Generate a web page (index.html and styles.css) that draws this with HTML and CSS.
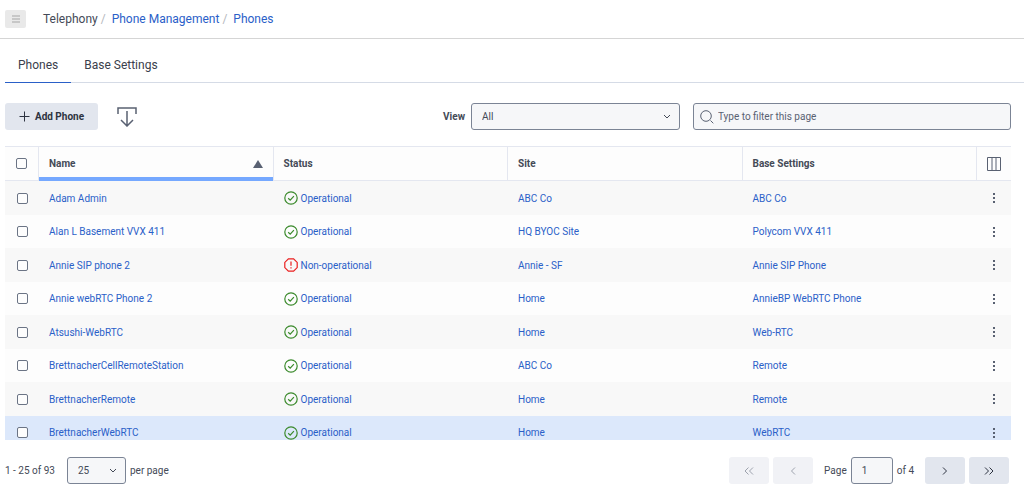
FILE: index.html
```html
<!DOCTYPE html>
<html lang="en">

<head>
    <meta charset="UTF-8">
    <title>Phone Management</title>
    <link rel="stylesheet" href="styles.css">
</head>

<body>
    <svg class="sprite" aria-hidden="true">
        <symbol id="ok" viewBox="0 0 14 14">
            <circle cx="7" cy="7" r="6.2" />
            <path d="M4.2 7.2l2 1.9 3.7-4" />
        </symbol>
        <symbol id="error" viewBox="0 0 14 14">
            <path d="M4.4.8h5.2l3.6 3.6v5.2l-3.6 3.6H4.4L.8 9.6V4.4z" />
            <path d="M7 3.4v4.4M7 9.2v1.4" />
        </symbol>
        <symbol id="dots" viewBox="0 0 4 12">
            <path d="M1 1h2v2H1zM1 5h2v2H1zM1 9h2v2H1z" />
        </symbol>
    </svg>

    <header class="topbar">
        <button class="menu-btn" type="button" aria-label="Menu">
            <svg width="10" height="8" viewBox="0 0 10 8"><path d="M1 1h8M1 4h8M1 7h8" /></svg>
        </button>
        <nav class="breadcrumb">
            <span>Telephony</span>
            <span class="sep">/</span>
            <a href="#">Phone Management</a>
            <span class="sep">/</span>
            <a href="#">Phones</a>
        </nav>
    </header>

    <main class="content">
        <nav class="tabs">
            <a class="tab active" href="#">Phones</a>
            <a class="tab" href="#">Base Settings</a>
        </nav>

        <div class="toolbar">
            <button class="btn add-btn" type="button">
                <svg width="11" height="11" viewBox="0 0 11 11"><path d="M5.500.5v10M.5 5.500h10" /></svg>
                Add Phone
            </button>
            <button class="export-btn" type="button" aria-label="Export">
                <svg width="20" height="20" viewBox="0 0 20 20"><path d="M1 7V1h18v6M10 4v14M4 13l6 6 6-6" /></svg>
            </button>
            <label class="view-label" for="view">View</label>
            <div class="select view-select">
                <select id="view">
                    <option>All</option>
                </select>
                <svg class="chevron" width="8" height="6" viewBox="0 0 8 6"><path d="M1 1l3 3 3-3" /></svg>
            </div>
            <div class="search">
                <svg width="14" height="14" viewBox="0 0 14 14"><circle cx="6" cy="6" r="5.3" /><path d="M10.5 10.5l2.8 2.8" /></svg>
                <input type="text" placeholder="Type to filter this page" aria-label="Filter">
            </div>
        </div>

        <div class="table-wrap">
            <table>
                <colgroup>
                    <col class="col-check">
                    <col>
                    <col>
                    <col>
                    <col>
                    <col class="col-menu">
                </colgroup>
                <thead>
                    <tr>
                        <th class="check"><input type="checkbox" aria-label="Select all"></th>
                        <th class="sorted">Name <svg class="sort" width="10" height="8" viewBox="0 0 10 8"><path d="M5 0l5 8H0z" /></svg></th>
                        <th>Status</th>
                        <th>Site</th>
                        <th>Base Settings</th>
                        <th class="menu">
                            <button class="icon-btn" type="button" aria-label="Columns">
                                <svg class="columns" width="14" height="14" viewBox="0 0 14 14"><path d="M.5.5h13v13H.5zM5 .5v13M9 .5v13" /></svg>
                            </button>
                        </th>
                    </tr>
                </thead>
                <tbody>
                    <tr>
                        <td class="check"><input type="checkbox" aria-label="Select Adam Admin"></td>
                        <td><a href="#">Adam Admin</a></td>
                        <td><a class="status" href="#"><svg class="ok"><use href="#ok" /></svg>Operational</a></td>
                        <td><a href="#">ABC Co</a></td>
                        <td><a href="#">ABC Co</a></td>
                        <td class="menu"><button class="icon-btn" type="button" aria-label="Actions"><svg class="dots"><use href="#dots" /></svg></button></td>
                    </tr>
                    <tr>
                        <td class="check"><input type="checkbox" aria-label="Select Alan L Basement VVX 411"></td>
                        <td><a href="#">Alan L Basement VVX 411</a></td>
                        <td><a class="status" href="#"><svg class="ok"><use href="#ok" /></svg>Operational</a></td>
                        <td><a href="#">HQ BYOC Site</a></td>
                        <td><a href="#">Polycom VVX 411</a></td>
                        <td class="menu"><button class="icon-btn" type="button" aria-label="Actions"><svg class="dots"><use href="#dots" /></svg></button></td>
                    </tr>
                    <tr>
                        <td class="check"><input type="checkbox" aria-label="Select Annie SIP phone 2"></td>
                        <td><a href="#">Annie SIP phone 2</a></td>
                        <td><a class="status" href="#"><svg class="error"><use href="#error" /></svg>Non-operational</a></td>
                        <td><a href="#">Annie - SF</a></td>
                        <td><a href="#">Annie SIP Phone</a></td>
                        <td class="menu"><button class="icon-btn" type="button" aria-label="Actions"><svg class="dots"><use href="#dots" /></svg></button></td>
                    </tr>
                    <tr>
                        <td class="check"><input type="checkbox" aria-label="Select Annie webRTC Phone 2"></td>
                        <td><a href="#">Annie webRTC Phone 2</a></td>
                        <td><a class="status" href="#"><svg class="ok"><use href="#ok" /></svg>Operational</a></td>
                        <td><a href="#">Home</a></td>
                        <td><a href="#">AnnieBP WebRTC Phone</a></td>
                        <td class="menu"><button class="icon-btn" type="button" aria-label="Actions"><svg class="dots"><use href="#dots" /></svg></button></td>
                    </tr>
                    <tr>
                        <td class="check"><input type="checkbox" aria-label="Select Atsushi-WebRTC"></td>
                        <td><a href="#">Atsushi-WebRTC</a></td>
                        <td><a class="status" href="#"><svg class="ok"><use href="#ok" /></svg>Operational</a></td>
                        <td><a href="#">Home</a></td>
                        <td><a href="#">Web-RTC</a></td>
                        <td class="menu"><button class="icon-btn" type="button" aria-label="Actions"><svg class="dots"><use href="#dots" /></svg></button></td>
                    </tr>
                    <tr>
                        <td class="check"><input type="checkbox" aria-label="Select BrettnacherCellRemoteStation"></td>
                        <td><a href="#">BrettnacherCellRemoteStation</a></td>
                        <td><a class="status" href="#"><svg class="ok"><use href="#ok" /></svg>Operational</a></td>
                        <td><a href="#">ABC Co</a></td>
                        <td><a href="#">Remote</a></td>
                        <td class="menu"><button class="icon-btn" type="button" aria-label="Actions"><svg class="dots"><use href="#dots" /></svg></button></td>
                    </tr>
                    <tr>
                        <td class="check"><input type="checkbox" aria-label="Select BrettnacherRemote"></td>
                        <td><a href="#">BrettnacherRemote</a></td>
                        <td><a class="status" href="#"><svg class="ok"><use href="#ok" /></svg>Operational</a></td>
                        <td><a href="#">Home</a></td>
                        <td><a href="#">Remote</a></td>
                        <td class="menu"><button class="icon-btn" type="button" aria-label="Actions"><svg class="dots"><use href="#dots" /></svg></button></td>
                    </tr>
                    <tr class="highlight">
                        <td class="check"><input type="checkbox" aria-label="Select BrettnacherWebRTC"></td>
                        <td><a href="#">BrettnacherWebRTC</a></td>
                        <td><a class="status" href="#"><svg class="ok"><use href="#ok" /></svg>Operational</a></td>
                        <td><a href="#">Home</a></td>
                        <td><a href="#">WebRTC</a></td>
                        <td class="menu"><button class="icon-btn" type="button" aria-label="Actions"><svg class="dots"><use href="#dots" /></svg></button></td>
                    </tr>
                </tbody>
            </table>
        </div>

        <footer class="pagination">
            <span>1 - 25 of 93</span>
            <div class="select size-select">
                <select id="pageSize">
                    <option>25</option>
                </select>
                <svg class="chevron" width="8" height="6" viewBox="0 0 8 6"><path d="M1 1l3 3 3-3" /></svg>
            </div>
            <label for="pageSize">per page</label>

            <div class="pager">
                <button class="btn" type="button" disabled aria-label="First page">
                    <svg width="10" height="8" viewBox="0 0 10 8"><path d="M4.500.5L1 4l3.500 3.500M9 .5L5.500 4 9 7.500" /></svg>
                </button>
                <button class="btn" type="button" disabled aria-label="Previous page">
                    <svg width="6" height="8" viewBox="0 0 6 8"><path d="M5 .5L1.500 4 5 7.500" /></svg>
                </button>
                <label class="page-label" for="page">Page</label>
                <input id="page" class="page-input" type="text" value="1">
                <span class="page-total">of 4</span>
                <button class="btn" type="button" aria-label="Next page">
                    <svg width="6" height="8" viewBox="0 0 6 8"><path d="M1 .5L4.500 4 1 7.500" /></svg>
                </button>
                <button class="btn" type="button" aria-label="Last page">
                    <svg width="10" height="8" viewBox="0 0 10 8"><path d="M1 .5L4.500 4 1 7.500M5.500.5L9 4 5.500 7.500" /></svg>
                </button>
            </div>
        </footer>
    </main>
</body>

</html>
```
FILE: styles.css
```css
* {
    box-sizing: border-box;
}

body {
    display: flex;
    flex-direction: column;
    height: 100vh;
    margin: 0;
    font-family: Roboto, "Liberation Sans", sans-serif;
    font-size: 10px;
    color: #444a57;
    background-color: #fff;
}

a {
    color: #2a60c8;
    text-decoration: none;
}

button,
input,
select {
    font: inherit;
    color: inherit;
}

svg {
    fill: none;
    stroke: currentColor;
}

.sprite {
    position: absolute;
    width: 0;
    height: 0;
}

/* top bar */
.topbar {
    display: flex;
    align-items: center;
    gap: 17px;
    height: 39px;
    padding: 0 5px;
    border-bottom: 1px solid #d5d5d5;
}

.menu-btn {
    display: flex;
    align-items: center;
    justify-content: center;
    width: 21px;
    height: 18px;
    padding: 0;
    border: 0;
    border-radius: 2px;
    background-color: #e9e9e9;
    color: #a5a5a5;
}

.breadcrumb {
    display: flex;
    font-size: 12px;
}

.sep {
    margin: 0 6px 0 3px;
    color: #b5b8bd;
}

/* tabs */
.content {
    display: flex;
    flex: 1;
    flex-direction: column;
    min-height: 0;
    padding: 0 13px 0 5px;
}

.tabs {
    display: flex;
    margin: 10px -13px 0 0;
    border-bottom: 1px solid #d5dbe6;
}

.tab {
    margin-bottom: -1px;
    padding: 0 13px;
    border-bottom: 1px solid transparent;
    font-size: 12px;
    line-height: 33px;
    color: #3a404c;
}

.tab.active {
    border-bottom-color: #2a60c8;
}

/* toolbar */
.toolbar {
    display: flex;
    align-items: center;
    padding: 20px 0 16px;
}

.btn {
    display: flex;
    align-items: center;
    justify-content: center;
    width: 40px;
    height: 27px;
    padding: 0;
    border: 0;
    border-radius: 3px;
    background-color: #e2e6ee;
    color: #2d3340;
}

.btn:disabled {
    background-color: #f1f2f6;
    color: #9da2ad;
}

.add-btn {
    gap: 5px;
    width: 93px;
    font-weight: bold;
}

.export-btn {
    display: flex;
    margin-left: 19px;
    padding: 0;
    border: 0;
    background: none;
    color: #596172;
}

.export-btn svg {
    stroke-width: 1.5;
}

.view-label {
    margin: 0 6px 0 auto;
    font-weight: bold;
}

.select {
    position: relative;
}

.select select {
    width: 100%;
    height: 27px;
    padding: 0 10px;
    border: 1px solid #7b8495;
    border-radius: 3px;
    appearance: none;
    background-color: #f6f7f9;
}

.chevron {
    position: absolute;
    top: 11px;
    right: 9px;
    pointer-events: none;
}

.view-select {
    width: 209px;
    margin-right: 13px;
}

.search {
    display: flex;
    align-items: center;
    gap: 4px;
    width: 318px;
    height: 27px;
    padding: 0 6px;
    border: 1px solid #7b8495;
    border-radius: 3px;
    background-color: #f6f7f9;
    color: #596172;
}

.search input {
    flex: 1;
    padding: 0;
    border: 0;
    outline: 0;
    background: none;
}

.search input::placeholder {
    color: #596172;
}

/* table */
.table-wrap {
    flex: 1;
    min-height: 0;
    overflow: hidden;
}

table {
    width: 100%;
    table-layout: fixed;
    border-spacing: 0;
}

.col-check,
.col-menu {
    width: 34px;
}

th,
td {
    padding: 0 10px;
    text-align: left;
}

th {
    height: 35px;
    border: solid #e4e7f0;
    border-width: 1px 1px 1px 0;
    background-color: #fdfdfd;
}

th:last-child {
    border-right: 0;
}

th.sorted {
    border-bottom: 0;
    box-shadow: inset 0 -4px #75a8ff;
}

.sort {
    float: right;
    margin: 2px 0;
    fill: #596172;
    stroke: none;
}

td {
    height: 33px;
    background-color: #fdfdfd;
}

tr:nth-child(odd) td {
    height: 34px;
    background-color: #f8f8f8;
}

tr.highlight td {
    background-color: #dce8fb;
}

th.check,
th.menu,
td.check,
td.menu {
    padding: 0;
    text-align: center;
}

input[type="checkbox"] {
    display: block;
    width: 11px;
    height: 11px;
    margin: 0 auto;
    border: 1px solid #6b7485;
    border-radius: 2px;
    appearance: none;
    background-color: #fdfdfd;
}

.icon-btn {
    display: flex;
    margin: 0 auto;
    padding: 0;
    border: 0;
    background: none;
    color: #596172;
}

.dots {
    width: 4px;
    height: 12px;
    fill: #596172;
    stroke: none;
}

.status {
    display: flex;
    align-items: center;
    gap: 3px;
}

.ok,
.error {
    width: 14px;
    height: 14px;
    stroke-width: 1.2;
}

.ok {
    color: #3b8a2c;
}

.error {
    color: #ea1f1f;
}

/* pagination */
.pagination {
    display: flex;
    align-items: center;
    padding: 17px 2px 14px 0;
}

.size-select {
    width: 59px;
    margin: 0 4px 0 12px;
}

.pager {
    display: flex;
    align-items: center;
    gap: 4px;
    margin-left: auto;
}

.page-label {
    margin-left: 7px;
}

.page-input {
    width: 42px;
    height: 27px;
    padding: 0 10px;
    border: 1px solid #7b8495;
    border-radius: 3px;
    background-color: #f6f7f9;
}

.page-total {
    margin-right: 7px;
}
```
